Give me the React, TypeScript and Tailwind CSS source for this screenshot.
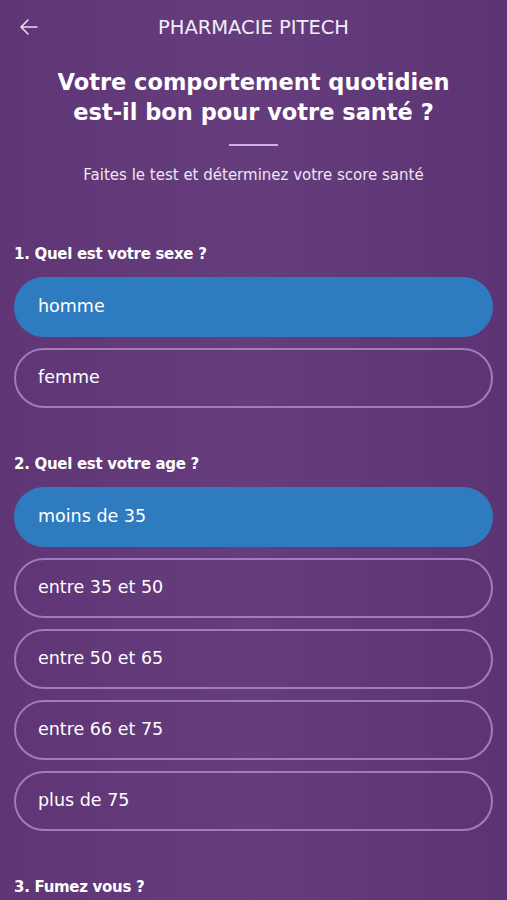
import React, { useState } from 'react';

const font = { fontFamily: '"DejaVu Sans", "Open Sans", sans-serif' };

const Option = ({ label, active, onClick }: { label: string; active: boolean; onClick: () => void }) => (
  <button
    onClick={onClick}
    className={`w-full h-[60px] rounded-full px-[22px] text-left text-[17.5px] text-white ${
      active ? 'bg-[#2f7bc0] border-2 border-[#2f7bc0]' : 'border-2 border-[#a07cbd]'
    }`}
  >
    {label}
  </button>
);

const Question = ({ title, options, value, onChange }: { title: string; options: string[]; value: number | null; onChange: (i: number) => void }) => (
  <div className="px-[14px]">
    <h2 className="text-[15px] font-bold text-white leading-5 tracking-[-0.3px]">{title}</h2>
    {options.length > 0 && (
      <div className="mt-[13px] flex flex-col gap-[11px]">
        {options.map((o, i) => (
          <Option key={o} label={o} active={value === i} onClick={() => onChange(i)} />
        ))}
      </div>
    )}
  </div>
);

export default function App() {
  const [sexe, setSexe] = useState<number | null>(0);
  const [age, setAge] = useState<number | null>(0);

  return (
    <div style={font} className="h-[900px] w-full overflow-hidden bg-gradient-to-r from-[#5f3576] via-[#663d7c] to-[#5c3473] text-white">
      {/* Header */}
      <div className="relative flex h-[56px] items-center justify-center">
        <button className="absolute left-[19px] top-[18px] text-[#e7dcef]">
          <svg width="20" height="18" viewBox="0 0 20 18" fill="none" stroke="currentColor" strokeWidth="1.6" strokeLinecap="round" strokeLinejoin="round">
            <path d="M18 9H2M9 2L2 9l7 7" />
          </svg>
        </button>
        <span className="text-[19.5px] text-[#f3ecf7]">PHARMACIE PITECH</span>
      </div>

      <h1 className="mt-[11px] text-center text-[22.5px] font-bold leading-[30px]">
        Votre comportement quotidien
        <br />
        est-il bon pour votre santé ?
      </h1>
      <div className="mx-auto mt-[17px] h-[2px] w-[49px] bg-[#cdb0e8]" />
      <p className="mt-[18px] text-center text-[15px] text-[#efe6f4]">Faites le test et déterminez votre score santé</p>

      <div className="mt-[57px]">
        <Question title="1. Quel est votre sexe ?" options={['homme', 'femme']} value={sexe} onChange={setSexe} />
      </div>
      <div className="mt-[46px]">
        <Question
          title="2. Quel est votre age ?"
          options={['moins de 35', 'entre 35 et 50', 'entre 50 et 65', 'entre 66 et 75', 'plus de 75']}
          value={age}
          onChange={setAge}
        />
      </div>
      <div className="mt-[46px]">
        <Question title="3. Fumez vous ?" options={[]} value={null} onChange={() => {}} />
      </div>
    </div>
  );
}
